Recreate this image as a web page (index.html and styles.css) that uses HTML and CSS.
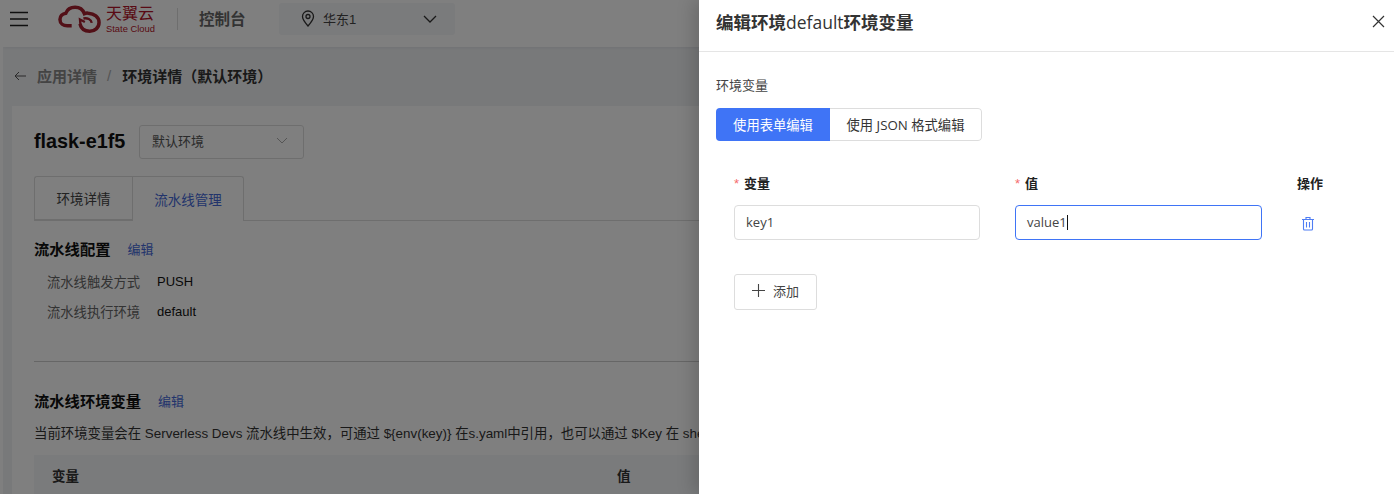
FILE: index.html
```html
<!DOCTYPE html>
<html lang="zh-CN">
<head>
<meta charset="utf-8">
<title>编辑环境变量</title>
<link rel="stylesheet" href="styles.css">
</head>
<body>
<div class="page">
  <header class="nav">
    <svg class="burger" width="18" height="16" viewBox="0 0 18 16"><path d="M0 1.500h18M0 8h18M0 14.500h18" stroke="#1f1f1f" stroke-width="1.600" fill="none"/></svg>
    <div class="logo">
      <svg width="43" height="28" viewBox="0 0 44 28"><path d="M14 21H9.500C5.500 21 2 18.500 2 14.500C2 11 4.500 8.500 8 8C9.500 4 13.500 2 17.500 2C22 2 25.500 4.500 27 8.500C28 8 29.500 7.800 31 8C37 8.500 42 12 42 17.500C42 23 37.500 26.500 32.500 26.500C27 26.500 23.500 23.500 22.500 19" fill="none" stroke="#a5202f" stroke-width="3.600"/><path d="M26 13.500C30 12.500 34 14.500 34.500 18M23 20L22.500 14.500L27.500 17" fill="none" stroke="#a5202f" stroke-width="2.400"/></svg>
      <div class="logo-text"><span class="logo-cn">天翼云</span><span class="logo-en">State Cloud</span></div>
    </div>
    <span class="nav-sep"></span>
    <span class="nav-title">控制台</span>
    <div class="region">
      <svg width="14" height="17" viewBox="0 0 14 17"><path d="M7 16C3.500 12 1.500 9.500 1.500 6.500A5.500 5.500 0 0 1 12.500 6.500C12.500 9.500 10.500 12 7 16Z" fill="none" stroke="#333" stroke-width="1.300"/><circle cx="7" cy="6.500" r="2" fill="none" stroke="#333" stroke-width="1.300"/></svg>
      <span class="region-name">华东1</span>
      <svg class="region-caret" width="14" height="8" viewBox="0 0 14 8"><path d="M1 1l6 6 6-6" fill="none" stroke="#333" stroke-width="1.300"/></svg>
    </div>
  </header>
  <div class="crumbs">
    <svg width="12" height="10" viewBox="0 0 12 10"><path d="M12 5H1M5 1L1 5l4 4" fill="none" stroke="#555" stroke-width="1"/></svg>
    <span class="crumb-link">应用详情</span>
    <span class="crumb-sep">/</span>
    <span class="crumb-now">环境详情（默认环境）</span>
  </div>
  <main class="card">
    <div class="app-head">
      <h1 class="app-name">flask-e1f5</h1>
      <div class="env-select"><span>默认环境</span>
        <svg width="12" height="7" viewBox="0 0 12 7"><path d="M1 1l5 5 5-5" fill="none" stroke="#aaa" stroke-width="1"/></svg>
      </div>
    </div>
    <div class="tabs">
      <span class="tab">环境详情</span>
      <span class="tab tab-active">流水线管理</span>
    </div>
    <div class="sec-head"><h2>流水线配置</h2><a class="link">编辑</a></div>
    <dl class="kv">
      <dt>流水线触发方式</dt><dd>PUSH</dd>
      <dt>流水线执行环境</dt><dd>default</dd>
    </dl>
    <hr class="rule">
    <div class="sec-head sec-env"><h2>流水线环境变量</h2><a class="link">编辑</a></div>
    <p class="hint">当前环境变量会在 Serverless Devs 流水线中生效，可通过 ${env(key)} 在s.yaml中引用，也可以通过 $Key 在 shell 中引用</p>
    <div class="thead"><span class="th-key">变量</span><span>值</span></div>
  </main>
</div>
<div class="mask"></div>
<aside class="drawer">
  <div class="drawer-head">
    <h3>编辑环境<span class="title-var">default</span>环境变量</h3>
    <svg width="13" height="13" viewBox="0 0 13 13"><path d="M1 1l11 11M12 1L1 12" stroke="#333" stroke-width="1.200" fill="none"/></svg>
  </div>
  <div class="drawer-body">
    <div class="field-label">环境变量</div>
    <div class="seg"><span class="seg-item seg-on">使用表单编辑</span><span class="seg-item">使用 JSON 格式编辑</span></div>
    <div class="grid">
      <div class="col-label"><i>*</i>变量</div>
      <div class="col-label"><i>*</i>值</div>
      <div class="col-label">操作</div>
      <div class="input">key1</div>
      <div class="input input-focus">value1<span class="caret"></span></div>
      <svg class="trash" width="14" height="15" viewBox="0 0 14 15"><path d="M1 3.500h12M5 3V1.500h4V3M2.500 3.500v9.500a1 1 0 0 0 1 1h7a1 1 0 0 0 1-1V3.500M5.500 6v5.500M8.500 6v5.500" fill="none" stroke="#4f7df3" stroke-width="1.100"/></svg>
    </div>
    <button class="add"><svg width="13" height="13" viewBox="0 0 13 13"><path d="M6.500 0v13M0 6.500h13" stroke="#444" stroke-width="1.100"/></svg>添加</button>
  </div>
</aside>
</body>
</html>
```
FILE: styles.css
```css
* { box-sizing: border-box; }
html, body { margin: 0; height: 494px; overflow: hidden; }
body {
  position: relative;
  background: #fff;
  font-family: "Liberation Sans", "Noto Sans CJK SC", sans-serif;
  font-size: 13px;
  color: #222;
}
h1, h2, h3, p, dl, dd, dt { margin: 0; font-weight: normal; }
.page { margin-left: 3px; height: 494px; overflow: hidden; background: #f0f2f5; }
.nav { height: 47px; background: #fff; display: flex; align-items: center; padding: 0 0 10px 7px; box-shadow: 0 1px 3px rgba(0,0,0,.06); }
.burger { flex: none; }
.logo { display: flex; align-items: center; gap: 5px; margin-left: 30px; color: #b3152a; }
.logo-text { display: flex; flex-direction: column; width: 49px; line-height: 1; margin-top: 2px; white-space: nowrap; }
.logo-cn { font-size: 16px; height: 18px; }
.logo-en { font-size: 9.400px; }
.nav-sep { width: 1px; height: 22px; background: #ddd; margin: 0 21px 0 22px; }
.nav-title { font-size: 15.500px; font-weight: bold; color: #666; width: 47px; white-space: nowrap; margin-bottom: 2px; }
.region { margin-left: 33px; width: 176px; height: 32px; background: #f5f6f8; border-radius: 3px; display: flex; align-items: center; padding: 0 18px 0 22px; }
.region-name { margin-left: 8px; font-size: 13px; color: #444; }
.region-caret { margin-left: auto; }
.crumbs { height: 59px; display: flex; align-items: center; padding: 0 0 2px 11px; font-size: 15px; }
.crumb-link { margin-left: 11px; color: #888; font-weight: bold; }
.crumb-sep { margin: 0 11px 0 10px; color: #aaa; }
.crumb-now { font-weight: bold; color: #333; }
.card { margin-left: 9px; height: 400px; width: 1400px; background: #fff; padding: 18px 0 0 22px; }
.app-head { display: flex; align-items: center; height: 35px; }
.app-name { font-size: 19.800px; font-weight: bold; color: #111; width: 105px; }
.env-select { width: 165px; height: 34px; border: 1px solid #ddd; border-radius: 3px; display: flex; align-items: center; justify-content: space-between; padding: 0 15px 2px 12px; color: #555; }
.tabs { display: flex; margin-top: 17px; width: 1400px; height: 45px; border-bottom: 1px solid #ddd; }
.tab { width: 98px; height: 44px; border: 1px solid #ddd; border-right: 0; border-radius: 3px 0 0 0; display: flex; align-items: center; justify-content: center; padding-bottom: 1px; color: #444; font-size: 13.500px; }
.tab-active { width: 112px; height: 45px; background: #fff; border-right: 1px solid #ddd; border-bottom: 0; border-radius: 0 3px 0 0; color: #4468d8; }
.sec-head { display: flex; align-items: center; gap: 17px; height: 20px; margin-top: 17px; }
.sec-head h2 { font-size: 15.300px; font-weight: bold; color: #111; }
.link { color: #4468d8; }
.kv { display: grid; grid-template-columns: 110px auto; justify-content: start; row-gap: 10px; padding-left: 13px; margin-top: 15px; line-height: 20px; }
.kv dt { color: #666; font-size: 13.300px; }
.kv dd { color: #111; line-height: 18px; }
.rule { border: 0; border-top: 1px solid #ccc; margin: 38px 0 0; width: 1400px; }
.sec-env { margin-top: 28px; }
.hint { margin-top: 14px; line-height: 20px; white-space: nowrap; color: #333; font-size: 13.400px; }
.thead { margin-top: 11px; height: 40px; width: 1400px; background: #f5f6f8; display: flex; align-items: center; padding-left: 18px; font-weight: bold; color: #333; font-size: 13.500px; }
.th-key { width: 565px; }
.mask { position: absolute; inset: 0; background: rgba(0,0,0,.5); }
.drawer { position: absolute; top: 0; right: 0; bottom: 0; width: 695px; background: #fff; box-shadow: -6px 0 16px rgba(0,0,0,.16); }
.drawer-head { height: 52px; border-bottom: 1px solid #e5e5e5; display: flex; align-items: center; justify-content: space-between; padding: 0 9px 8px 17px; }
.drawer-head h3 { font-size: 17.500px; font-weight: bold; color: #333; }
.title-var { font-family: "Open Sans", sans-serif; font-size: 17.500px; font-weight: normal; }
.drawer-body { padding: 24px 0 0 17px; }
.field-label { line-height: 20px; color: #444; }
.seg { display: inline-flex; margin-top: 12px; height: 33px; border-radius: 4px; overflow: hidden; vertical-align: top; font-size: 13.300px; }
.seg-item { width: 152px; display: flex; align-items: center; justify-content: center; color: #333; border: 1px solid #ddd; border-left: 0; border-radius: 0 4px 4px 0; font-family: "Open Sans", "Noto Sans CJK SC", sans-serif; }
.seg-on { width: 114px; background: #3f74f6; border: 0; border-radius: 0; color: #fff; }
.grid { display: grid; grid-template-columns: 246px 247px auto; column-gap: 35px; margin: 33px 0 0 18px; align-items: center; }
.col-label { font-size: 13px; font-weight: bold; color: #222; line-height: 20px; }
.col-label i { color: #f56c6c; font-style: normal; font-weight: normal; margin-right: 5px; }
.input { height: 35px; margin-top: 11px; border: 1px solid #ddd; border-radius: 4px; display: flex; align-items: center; padding: 0 0 1px 11px; font-family: "Open Sans", sans-serif; color: #444; }
.input-focus { border-color: #3f74f6; }
.caret { width: 1px; height: 15px; background: #111; }
.trash { margin-top: 12px; margin-left: 4px; }
.add { display: flex; align-items: center; gap: 8px; margin: 34px 0 0 18px; width: 83px; height: 36px; padding: 0 0 4px 17px; background: #fff; border: 1px solid #ddd; border-radius: 3px; font: 13px "Noto Sans CJK SC", sans-serif; color: #444; }
```
